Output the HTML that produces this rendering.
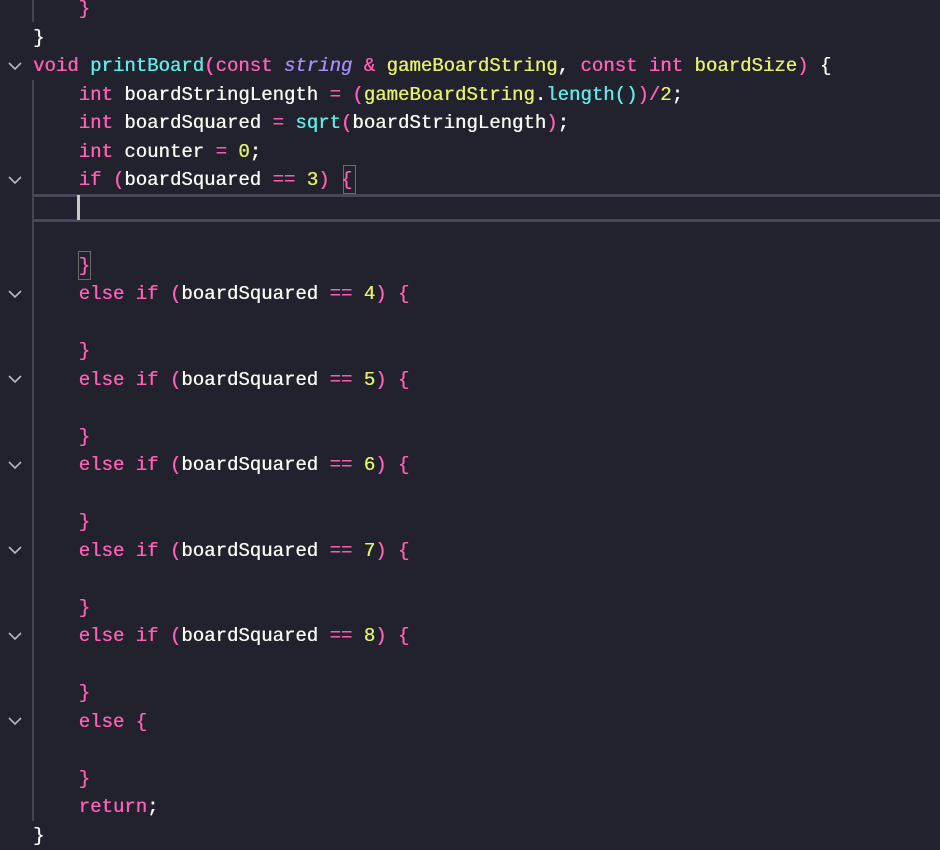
<!DOCTYPE html>
<html><head><meta charset="utf-8"><style>
html,body{margin:0;padding:0;width:940px;height:835px;overflow:hidden;background:#21222d;}
.l{position:absolute;left:33px;height:28.5px;line-height:28.5px;font-family:"Liberation Mono",monospace;font-size:19px;color:#f8f8f2;white-space:pre;text-shadow:0.4px 0 0 currentColor;}
.k{color:#ff5fb4}.f{color:#62ebe6}.y{color:#e6f06a}.s{color:#a58cf8;font-style:italic}.w{color:#f8f8f2}
.chev{position:absolute;left:8px;width:14px;height:9px;}
.guide{position:absolute;left:32px;width:2px;background:#44464f;}
</style></head><body>
<div class="guide" style="top:0;height:22px"></div>
<div class="guide" style="top:80px;height:741px"></div>
<div style="position:absolute;left:33px;top:194px;width:910px;height:22px;border-top:3px solid #464857;border-bottom:3px solid #464857;"></div>
<div style="position:absolute;left:77px;top:195px;width:3px;height:25px;background:#c8c8c8"></div>
<div style="position:absolute;left:343px;top:165px;width:11px;height:27px;border:1px solid #6a6c6c"></div>
<div style="position:absolute;left:78px;top:251px;width:11px;height:27px;border:1px solid #6a6c6c"></div>
<div id="code"></div>
<script>
var L=[
'    <span class="k">}</span>',
'}',
'<span class="k">void</span> <span class="f">printBoard</span><span class="k">(const</span> <span class="s">string</span> <span class="k">&amp;</span> <span class="y">gameBoardString</span>, <span class="k">const int</span> <span class="y">boardSize</span><span class="k">)</span> {',
'    <span class="k">int</span> boardStringLength <span class="k">=</span> <span class="k">(</span><span class="y">gameBoardString</span>.<span class="f">length()</span><span class="k">)/</span><span class="y">2</span>;',
'    <span class="k">int</span> boardSquared <span class="k">=</span> <span class="f">sqrt</span><span class="k">(</span>boardStringLength<span class="k">)</span>;',
'    <span class="k">int</span> counter <span class="k">=</span> <span class="y">0</span>;',
'    <span class="k">if (</span>boardSquared <span class="k">==</span> <span class="y">3</span><span class="k">) {</span>',
'','',
'    <span class="k">}</span>'];
for(var n=4;n<=8;n++){L.push('    <span class="k">else if (</span>boardSquared <span class="k">==</span> <span class="y">'+n+'</span><span class="k">) {</span>','','    <span class="k">}</span>');}
L.push('    <span class="k">else {</span>','','    <span class="k">}</span>','    <span class="k">return</span>;','}');
var h='',chev=[2,6,10,13,16,19,22,25];
for(var i=0;i<L.length;i++){var t=8.5-14.25;if(i>=1)t=37+28.5*(i-1)-14.25;h+='<div class="l" style="top:'+(t+1)+'px">'+L[i]+'</div>';}
for(var j=0;j<chev.length;j++){var c=37+28.5*(chev[j]-1);h+='<svg class="chev" style="top:'+(c-4)+'px" viewBox="0 0 14 9"><path d="M1 1 L7 7 L13 1" fill="none" stroke="#b8b8bc" stroke-width="1.6"/></svg>';}
document.getElementById('code').innerHTML=h;
</script>
</body></html>
